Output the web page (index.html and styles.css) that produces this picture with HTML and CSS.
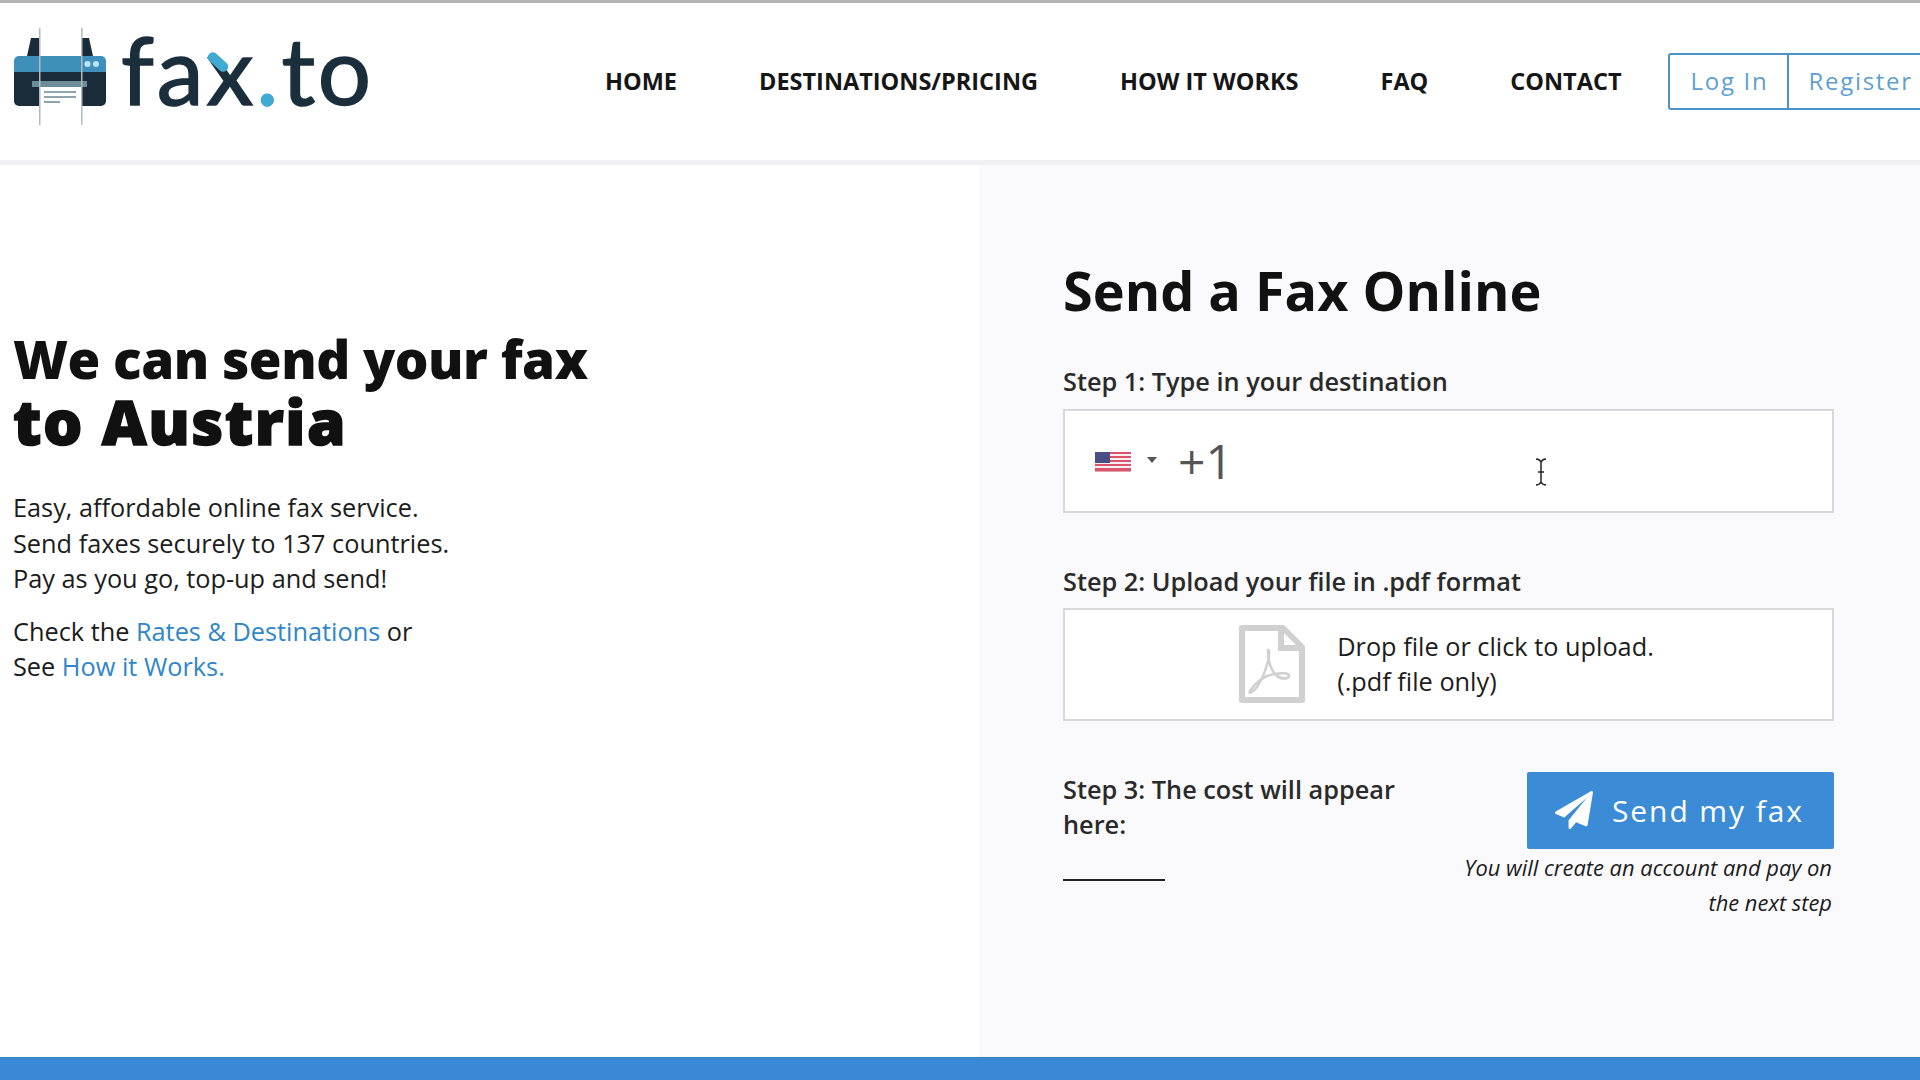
FILE: index.html
```html
<!DOCTYPE html>
<html lang="en">
<head>
<meta charset="utf-8">
<title>fax.to</title>
<link rel="stylesheet" href="styles.css">
</head>
<body>
<header class="header">
  <a class="logo">
    <svg class="logo-mark" width="92" height="98" viewBox="0 0 92 98">
      <path d="M13 28 L17 10 H25 V28Z M79 28 L75 10 H67 V28Z" fill="#1a2b3a"/>
      <path d="M0 33a5 5 0 0 1 5-5h82a5 5 0 0 1 5 5v11H0z" fill="#3f8fbb"/>
      <path d="M0 44h92v29a5 5 0 0 1-5 5H5a5 5 0 0 1-5-5z" fill="#1a2b3a"/>
      <circle cx="73.500" cy="36" r="3" fill="#bfe6f7"/><circle cx="82" cy="36" r="3" fill="#bfe6f7"/>
      <rect x="18" y="53" width="55" height="6" fill="#6d8c99"/>
      <rect x="26" y="59" width="41" height="39" fill="#fff"/>
      <rect x="25" y="0" width="1.500" height="97" fill="#b4b9bd"/><rect x="67" y="0" width="1.500" height="97" fill="#b4b9bd"/>
      <rect x="30" y="63" width="32" height="2" fill="#8ea4ae"/><rect x="30" y="68" width="32" height="2" fill="#8ea4ae"/><rect x="30" y="73" width="16" height="2" fill="#8ea4ae"/>
    </svg>
    <span class="logo-text">fa<span class="logo-x">x</span><span class="logo-dot">.</span>to</span>
  </a>
  <nav class="nav">
    <a>HOME</a><a>DESTINATIONS/PRICING</a><a>HOW IT WORKS</a><a>FAQ</a><a>CONTACT</a>
  </nav>
  <div class="auth">
    <a class="auth-btn auth-login">Log In</a><a class="auth-btn auth-register">Register</a>
  </div>
</header>
<main class="main">
  <section class="intro">
    <h1 class="intro-title"><span class="intro-line">We can send your fax</span><span class="intro-line intro-country">to Austria</span></h1>
    <p class="intro-text">Easy, affordable online fax service.<br>Send faxes securely to 137 countries.<br>Pay as you go, top-up and send!</p>
    <p class="intro-text">Check the <a class="link">Rates &amp; Destinations</a> or<br>See <a class="link">How it Works.</a></p>
  </section>
  <section class="panel">
    <h2 class="panel-title">Send a Fax Online</h2>
    <div class="step-label">Step 1: Type in your destination</div>
    <div class="field field-phone">
      <svg class="flag" width="36" height="20" viewBox="0 0 36 20">
        <rect width="36" height="20" fill="#fbeef0"/>
        <g fill="#d9556d"><rect y="0" width="36" height="2"/><rect y="4" width="36" height="2"/><rect y="8" width="36" height="2"/><rect y="12" width="36" height="2"/><rect y="16" width="36" height="3.500"/></g>
        <rect width="15" height="11" fill="#4a4f85"/>
      </svg>
      <span class="caret"></span>
      <span class="dial">+1</span>
      <svg class="ibeam" width="12" height="28" viewBox="0 0 12 28"><path d="M1 1c3 0 4 1 5 3 1-2 2-3 5-3M6 4v20M1 27c3 0 4-1 5-3 1 2 2 3 5 3M3 14h6" fill="none" stroke="#222" stroke-width="1.500"/></svg>
    </div>
    <div class="step-label step-two">Step 2: Upload your file in .pdf format</div>
    <div class="field field-upload">
      <svg class="pdf" width="66" height="78" viewBox="0 0 66 78">
        <path d="M3 3h41l19 19v53H3z" fill="none" stroke="#d0d0d0" stroke-width="6" stroke-linejoin="round"/>
        <path d="M42 3v20h21" fill="none" stroke="#d0d0d0" stroke-width="6"/>
        <path d="M29 25c0 12 3 20 8 25s12 4 13 1-8-4-19-1-18 13-20 16 3 2 7-4 9-18 11-26 1-11 0-11z" fill="none" stroke="#d0d0d0" stroke-width="2.500"/>
      </svg>
      <div class="upload-text">Drop file or click to upload.<br>(.pdf file only)</div>
    </div>
    <div class="step-three">
      <div class="cost">
        <div class="step-label cost-label">Step 3: The cost will appear here:</div>
        <div class="cost-line"></div>
      </div>
      <div class="send">
        <a class="send-btn">
          <svg width="38" height="38" viewBox="0 0 1792 1792"><path fill="#fff" d="M1764 11q33 24 27 64l-256 1536q-5 29-32 45-14 8-31 8-11 0-24-5l-453-185-242 295q-18 23-49 23-13 0-22-4-19-7-30.500-23.500t-11.500-36.500v-349l864-1059-1069 925-395-162q-37-14-40-55-2-40 32-59l1664-960q15-9 32-9 20 0 36 11z"/></svg>
          <span>Send my fax</span>
        </a>
        <p class="send-note">You will create an account and pay on the next step</p>
      </div>
    </div>
  </section>
</main>
<footer class="footer"></footer>
</body>
</html>
```
FILE: styles.css
```css
* { box-sizing: border-box; }
html, body { margin: 0; height: 100%; overflow: hidden; }
body {
  display: flex;
  flex-direction: column;
  width: 1920px;
  height: 1080px;
  font-family: "Open Sans", "Liberation Sans", sans-serif;
  color: #1c1c1c;
  background: #fff;
  border-top: 3px solid #b3b3b3;
}
.header {
  display: flex;
  align-items: center;
  height: 162px;
  flex: none;
  padding-left: 14px;
  border-bottom: 5px solid #f1f1f3;
}
.logo { display: flex; align-items: center; width: 591px; flex: none; margin-top: -9px; }
.logo-mark { flex: none; }
.logo-text {
  margin-left: 15px;
  font-family: Lato, sans-serif;
  font-size: 94px;
  line-height: 94px;
  letter-spacing: 3px;
  color: #1b2e3c;
  -webkit-text-stroke: 1.500px #1b2e3c;
  margin-top: -16px;
}
.logo-x { position: relative; }
.logo-x::before {
  content: "";
  position: absolute;
  left: 0;
  top: 45px;
  width: 24px;
  height: 10px;
  border-radius: 5px;
  background: #41aad2;
  transform: rotate(42deg);
}
.logo-dot { color: #41aad2; -webkit-text-stroke-color: #41aad2; }
.nav { display: flex; gap: 82px; font-size: 23.500px; font-weight: 700; color: #161616; flex: none; margin-top: -2px; }
.auth { display: flex; margin-left: 46px; flex: none; }
.auth-btn {
  display: block;
  height: 57px;
  line-height: 52px;
  font-size: 24px;
  letter-spacing: 1.700px;
  color: #5f9fd0;
  border: 2px solid #4a93c4;
  padding: 0 21px;
  white-space: nowrap;
}
.auth-login { border-radius: 3px 0 0 3px; width: 121px; }
.auth-register { border-left: 0; width: 220px; padding-left: 20px; }
.main { flex: 1; display: flex; min-height: 0; }
.intro { width: 979px; flex: none; padding: 162px 0 0 13px; background: #fff; }
.intro-title { margin: 0 0 37px; color: #111; }
.intro-line { display: block; font-size: 53px; line-height: 63px; font-weight: 800; letter-spacing: -0.500px; }
.intro-country { font-size: 62px; letter-spacing: 1.500px; -webkit-text-stroke: 1.500px #111; }
.intro-text { margin: 0 0 17px; font-size: 25.300px; line-height: 35.500px; }
.link { color: #2f86c8; }
.panel { flex: 1; padding: 89.500px 86px 0 84px; background: #fafafc; }
.panel-title { margin: 0 0 38px; font-size: 54px; line-height: 70px; font-weight: 700; color: #111; }
.step-label { font-size: 25.300px; line-height: 36px; font-weight: 600; color: #2a2a2a; }
.step-two { margin-top: 50px; }
.field { background: #fff; border: 2px solid #d8d8da; display: flex; align-items: center; }
.field-phone { position: relative; height: 104px; padding-left: 30px; margin-top: 10px; }
.flag { flex: none; margin-top: 2px; }
.caret { margin-left: 16px; border: 5px solid transparent; border-top: 6px solid #555; border-bottom: 0; margin-top: -2px; }
.dial { margin-left: 21px; font-size: 48px; color: #555; line-height: 1; }
.ibeam { position: absolute; left: 470px; top: 47px; }
.field-upload { height: 113px; justify-content: center; gap: 32px; padding-right: 4px; margin-top: 9px; }
.pdf { flex: none; }
.upload-text { font-size: 25.300px; line-height: 35.500px; color: #1c1c1c; }
.step-three { display: flex; justify-content: space-between; margin-top: 51px; }
.cost { width: 340px; }
.cost-label { line-height: 35.500px; }
.cost-line { width: 102px; height: 2px; background: #222; margin-top: 36px; }
.send { width: 373px; display: flex; flex-direction: column; align-items: flex-end; }
.send-btn {
  display: flex;
  align-items: center;
  gap: 19px;
  width: 307px;
  height: 77px;
  padding-left: 28px;
  background: #3b8bd6;
  border-radius: 2px;
  color: #fff;
  font-size: 30px;
  letter-spacing: 1.900px;
}
.send-btn svg { flex: none; }
.send-note { margin: 1px 2px 0 0; font-size: 21.900px; line-height: 35.500px; font-style: italic; text-align: right; color: #1c1c1c; }
.footer { height: 23px; flex: none; background: #3a89d6; border-top: 1px solid #3a7fbe; }
```
